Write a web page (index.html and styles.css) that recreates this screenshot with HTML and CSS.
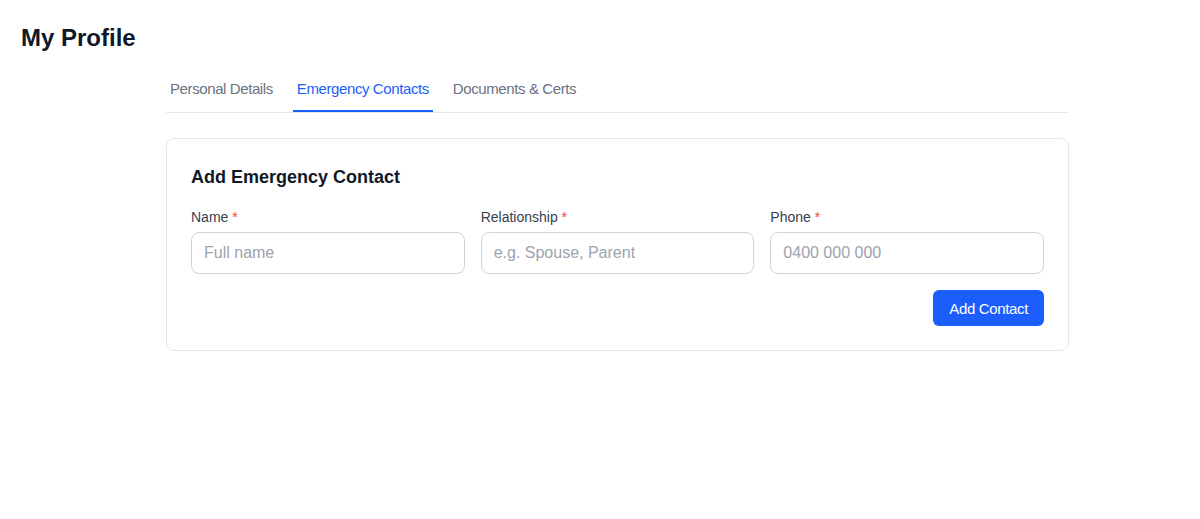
FILE: index.html
```html
<!DOCTYPE html>
<html lang="en">
<head>
<meta charset="utf-8">
<title>My Profile</title>
<link rel="stylesheet" href="styles.css">
</head>
<body>
<div class="page">
  <h1 class="page-title">My Profile</h1>
  <div class="content">
    <nav class="tabs">
      <span class="tab">Personal Details</span>
      <span class="tab active">Emergency Contacts</span>
      <span class="tab">Documents &amp; Certs</span>
    </nav>
    <section class="card">
      <h2 class="card-title">Add Emergency Contact</h2>
      <div class="fields">
        <label class="field">
          <span class="label">Name <span class="req">*</span></span>
          <input class="input" type="text" placeholder="Full name">
        </label>
        <label class="field">
          <span class="label">Relationship <span class="req">*</span></span>
          <input class="input" type="text" placeholder="e.g. Spouse, Parent">
        </label>
        <label class="field">
          <span class="label">Phone <span class="req">*</span></span>
          <input class="input" type="text" placeholder="0400 000 000">
        </label>
      </div>
      <div class="actions">
        <button class="btn" type="button">Add Contact</button>
      </div>
    </section>
  </div>
</div>
</body>
</html>
```
FILE: styles.css
```css
* { box-sizing: border-box; }
html, body { margin: 0; padding: 0; background: #ffffff; }
body {
  font-family: "Liberation Sans", Arial, Helvetica, sans-serif;
  color: #111827;
}
.page {
  padding: 22px 21px;
}
.page-title {
  margin: 0;
  font-size: 24px;
  line-height: 32px;
  font-weight: 700;
  color: #111827;
}
.content {
  margin-left: 145px;
  width: 903px;
  margin-top: 25px;
}
.tabs {
  display: flex;
  gap: 16px;
  border-bottom: 1px solid #e5e7eb;
}
.tab {
  padding: 0 4px 11px;
  font-size: 15px;
  line-height: 20px;
  letter-spacing: -0.4px;
  color: #6b7280;
  border-bottom: 2px solid transparent;
}
.tab.active {
  color: #1b5efc;
  border-bottom-color: #1b5efc;
}
.card {
  margin-top: 25px;
  border: 1px solid #e5e7eb;
  border-radius: 8px;
  padding: 24px;
  background: #fff;
}
.card-title {
  margin: 0;
  font-size: 18px;
  line-height: 28px;
  font-weight: 700;
  color: #111827;
}
.fields {
  margin-top: 16px;
  display: grid;
  grid-template-columns: repeat(3, 1fr);
  gap: 16px;
}
.field {
  display: flex;
  flex-direction: column;
  gap: 5px;
}
.label {
  font-size: 14px;
  line-height: 20px;
  color: #374151;
}
.req { color: #ef4444; }
.input {
  height: 42px;
  width: 100%;
  border: 1px solid #d1d5db;
  border-radius: 8px;
  padding: 0 12px;
  font-family: inherit;
  font-size: 16px;
  color: #111827;
  background: #fff;
  outline: none;
}
.input::placeholder { color: #9ca3af; }
.actions {
  margin-top: 16px;
  display: flex;
  justify-content: flex-end;
}
.btn {
  height: 36px;
  padding: 0 16px;
  border: none;
  border-radius: 6px;
  background: #1b5efc;
  color: #fff;
  font-family: inherit;
  font-size: 15px;
  letter-spacing: -0.35px;
}
```
